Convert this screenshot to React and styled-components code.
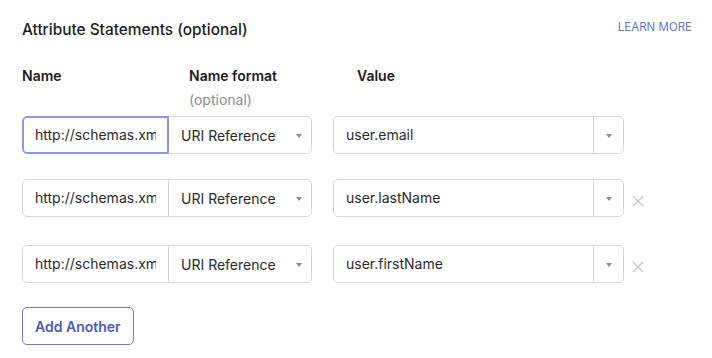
import React from 'react'
import styled, { createGlobalStyle } from 'styled-components'

const Global = createGlobalStyle`
  body {
    margin: 0;
    background: #fff;
    font-family: Inter, "Noto Sans", sans-serif;
    color: #1d1d21;
  }
`

const Page = styled.section`
  padding: 18px 20px 0 22px;
`

const Header = styled.div`
  display: flex;
  justify-content: space-between;
  align-items: flex-start;
`

const Title = styled.h3`
  margin: 0;
  font-size: 15.4px;
  line-height: 24px;
  font-weight: 500;
  color: #1d1d21;
`

const LearnMore = styled.a`
  font-size: 11.5px;
  line-height: 16px;
  margin-top: 1px;
  color: #6b77cf;
  text-decoration: none;
`

const Columns = styled.div`
  display: grid;
  grid-template-columns: 167px 168px auto;
  margin-top: 24px;
`

const ColLabel = styled.div`
  font-size: 14px;
  line-height: 20px;
  font-weight: 600;
  color: #1d1d21;
`

const Optional = styled.div`
  margin-top: 4px;
  font-size: 14px;
  line-height: 20px;
  font-weight: 400;
  color: #8c8c96;
`

const Row = styled.div`
  display: flex;
  align-items: center;
  margin-top: ${p => p.$mt}px;
  height: 38px;
`

const Field = styled.div`
  display: flex;
  height: 38px;
`

const NameInput = styled.div`
  width: 147px;
  height: 38px;
  box-sizing: border-box;
  border: 1px solid ${p => (p.$focus ? '#8d97df' : '#d7d7dc')};
  box-shadow: ${p => (p.$focus ? 'inset 0 0 0 1px #8d97df' : 'none')};
  border-radius: 5px 0 0 5px;
  padding: 0 12px;
  position: relative;
  z-index: 1;
  background: #fff;
`

const InputText = styled.div`
  font-size: 14px;
  line-height: 36px;
  color: #2a2a2e;
  white-space: nowrap;
  overflow: hidden;
`

const FormatSelect = styled.div`
  width: 144px;
  height: 38px;
  box-sizing: border-box;
  border: 1px solid #d7d7dc;
  margin-left: -1px;
  border-radius: 0 5px 5px 0;
  padding: 0 9px 0 12px;
  display: flex;
  align-items: center;
  justify-content: space-between;
  font-size: 14px;
  color: #2a2a2e;
`

const ValueBox = styled.div`
  display: flex;
  margin-left: 21px;
  width: 291px;
  height: 38px;
  box-sizing: border-box;
  border: 1px solid #d7d7dc;
  border-radius: 5px;
`

const ValueText = styled.div`
  flex: 1;
  padding: 0 12px;
  font-size: 14px;
  line-height: 36px;
  color: #2a2a2e;
`

const ValueToggle = styled.div`
  width: 29px;
  border-left: 1px solid #d7d7dc;
  display: flex;
  align-items: center;
  justify-content: center;
`

const Caret = styled.span`
  width: 0;
  height: 0;
  border-left: 3px solid transparent;
  border-right: 3px solid transparent;
  border-top: 4px solid #8a8a90;
  margin-top: 1px;
`

const Remove = styled.button`
  margin-left: 8px;
  margin-top: 5px;
  padding: 0;
  width: 12px;
  height: 12px;
  border: 0;
  background: none;
  display: flex;
`

const AddButton = styled.button`
  margin-top: 24px;
  height: 38px;
  padding: 0 12px;
  box-sizing: border-box;
  border: 1px solid #6f7bd6;
  border-radius: 5px;
  background: #fff;
  color: #4d5ac2;
  font-family: Inter, "Noto Sans", sans-serif;
  font-size: 14px;
  font-weight: 600;
`

const rows = [
  { value: 'user.email', focus: true, removable: false, mt: 6 },
  { value: 'user.lastName', focus: false, removable: true, mt: 25 },
  { value: 'user.firstName', focus: false, removable: true, mt: 28 },
]

function CloseIcon() {
  return (
    <svg width="12" height="12" viewBox="0 0 12 12">
      <path d="M1 1L11 11M11 1L1 11" stroke="#c6c6ca" strokeWidth="1.4" />
    </svg>
  )
}

export default function App() {
  return (
    <Page>
      <Global />
      <Header>
        <Title>Attribute Statements (optional)</Title>
        <LearnMore href="#">LEARN MORE</LearnMore>
      </Header>
      <Columns>
        <ColLabel>Name</ColLabel>
        <div>
          <ColLabel>Name format</ColLabel>
          <Optional>(optional)</Optional>
        </div>
        <ColLabel>Value</ColLabel>
      </Columns>
      {rows.map((r, i) => (
        <Row key={i} $mt={r.mt}>
          <Field>
            <NameInput $focus={r.focus}>
              <InputText>http://schemas.xmlsoap.org/ws/2005/05/identity/claims</InputText>
            </NameInput>
            <FormatSelect>
              URI Reference
              <Caret />
            </FormatSelect>
          </Field>
          <ValueBox>
            <ValueText>{r.value}</ValueText>
            <ValueToggle>
              <Caret />
            </ValueToggle>
          </ValueBox>
          {r.removable && (
            <Remove>
              <CloseIcon />
            </Remove>
          )}
        </Row>
      ))}
      <AddButton>Add Another</AddButton>
    </Page>
  )
}
